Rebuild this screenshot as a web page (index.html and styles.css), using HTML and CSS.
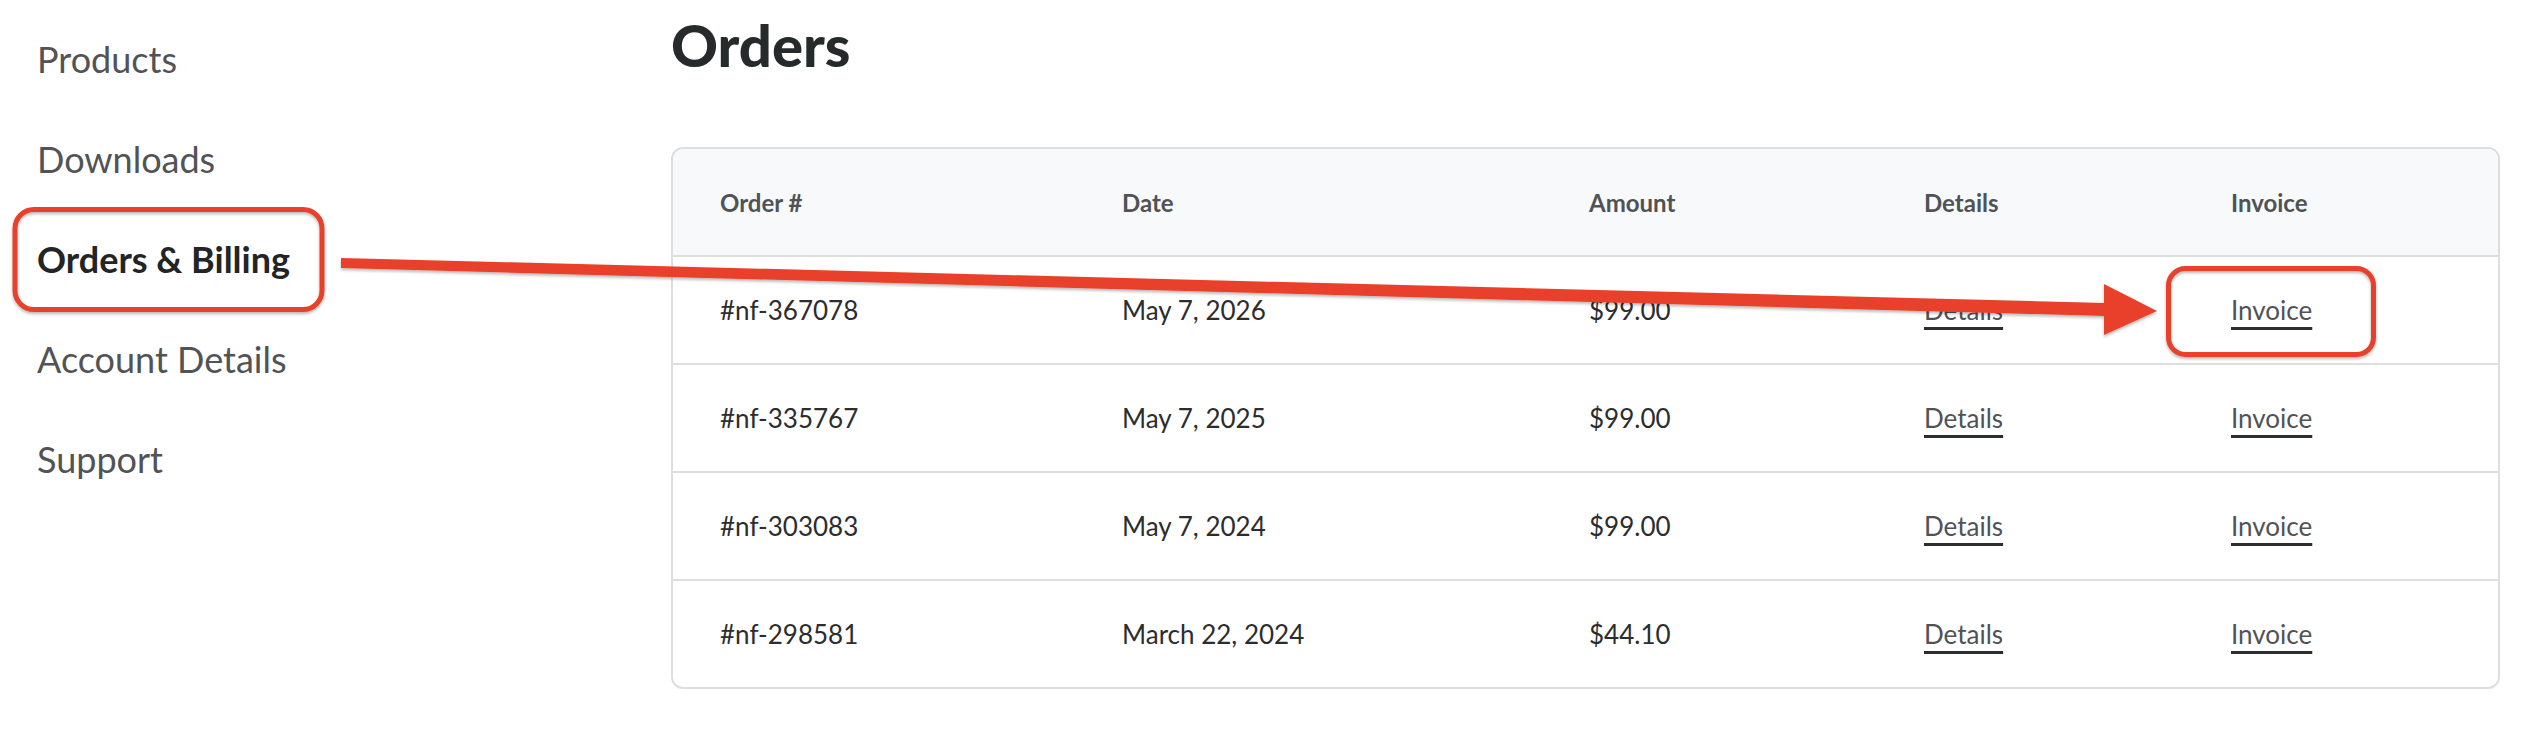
FILE: index.html
```html
<!DOCTYPE html>
<html lang="en">
<head>
<meta charset="utf-8">
<title>Orders</title>
<link rel="stylesheet" href="styles.css">
</head>
<body>
<div class="page">
  <nav class="sidebar">
    <a class="nav-item">Products</a>
    <a class="nav-item">Downloads</a>
    <a class="nav-item active">Orders &amp; Billing</a>
    <a class="nav-item">Account Details</a>
    <a class="nav-item">Support</a>
  </nav>
  <main class="main">
    <h1 class="title">Orders</h1>
    <div class="orders">
      <div class="row head">
        <div class="cell">Order #</div>
        <div class="cell">Date</div>
        <div class="cell">Amount</div>
        <div class="cell">Details</div>
        <div class="cell">Invoice</div>
      </div>
      <div class="row">
        <div class="cell">#nf-367078</div>
        <div class="cell">May 7, 2026</div>
        <div class="cell">$99.00</div>
        <div class="cell"><a class="link">Details</a></div>
        <div class="cell"><a class="link">Invoice</a></div>
      </div>
      <div class="row">
        <div class="cell">#nf-335767</div>
        <div class="cell">May 7, 2025</div>
        <div class="cell">$99.00</div>
        <div class="cell"><a class="link">Details</a></div>
        <div class="cell"><a class="link">Invoice</a></div>
      </div>
      <div class="row">
        <div class="cell">#nf-303083</div>
        <div class="cell">May 7, 2024</div>
        <div class="cell">$99.00</div>
        <div class="cell"><a class="link">Details</a></div>
        <div class="cell"><a class="link">Invoice</a></div>
      </div>
      <div class="row">
        <div class="cell">#nf-298581</div>
        <div class="cell">March 22, 2024</div>
        <div class="cell">$44.10</div>
        <div class="cell"><a class="link">Details</a></div>
        <div class="cell"><a class="link">Invoice</a></div>
      </div>
    </div>
  </main>
</div>
<svg class="annotations" width="2534" height="748" viewBox="0 0 2534 748" xmlns="http://www.w3.org/2000/svg">
  <defs>
    <filter id="shadow" x="-5%" y="-20%" width="110%" height="140%">
      <feDropShadow dx="0" dy="2" stdDeviation="1.5" flood-color="#000" flood-opacity="0.28"/>
    </filter>
  </defs>
  <g filter="url(#shadow)" fill="none" stroke="#e8412a" stroke-width="5">
    <rect x="15" y="209.5" width="307" height="100" rx="19" ry="19"/>
    <rect x="2168.5" y="268.5" width="205" height="86" rx="17" ry="17"/>
  </g>
  <g filter="url(#shadow)" fill="#e8412a">
    <polygon points="341,258 2106,303 2106,316 341,268"/>
    <polygon points="2104,284 2157,311 2104,335"/>
  </g>
</svg>
</body>
</html>
```
FILE: styles.css
```css
html, body {
  margin: 0;
  padding: 0;
  background: #ffffff;
}

body {
  font-family: "Lato", "Liberation Sans", sans-serif;
  color: #2d2d2d;
  width: 2534px;
  height: 748px;
  overflow: hidden;
  position: relative;
}

.page {
  display: flex;
}

.sidebar {
  width: 671px;
  flex: none;
  padding: 9px 0 0 37px;
  box-sizing: border-box;
  display: flex;
  flex-direction: column;
}

.nav-item {
  display: block;
  height: 100px;
  line-height: 100px;
  font-size: 36px;
  color: #515356;
  white-space: nowrap;
}

.nav-item.active {
  font-weight: 700;
  color: #222425;
}

.main {
  flex: 1;
  padding-right: 34px;
}

.title {
  margin: 16px 0 73px 0;
  font-size: 58px;
  line-height: 58px;
  font-weight: 900;
  color: #272a2b;
}

.orders {
  border: 2px solid #dcdee0;
  border-radius: 12px;
  overflow: hidden;
}

.row {
  display: grid;
  grid-template-columns: 402px 467px 335px 307px 1fr;
  padding-left: 47px;
  height: 106px;
  align-items: center;
  border-top: 2px solid #dcdee0;
  font-size: 26px;
  color: #2b2d2e;
}

.row.head {
  border-top: none;
  background: #f8f9fa;
  font-size: 24px;
  font-weight: 700;
  color: #505356;
}

.cell {
  white-space: nowrap;
}

.link {
  color: #505356;
  text-decoration: underline;
  text-decoration-color: #2b2d2e;
  text-decoration-thickness: 3px;
  text-underline-offset: 7px;
}

.annotations {
  position: absolute;
  left: 0;
  top: 0;
  pointer-events: none;
}
```
